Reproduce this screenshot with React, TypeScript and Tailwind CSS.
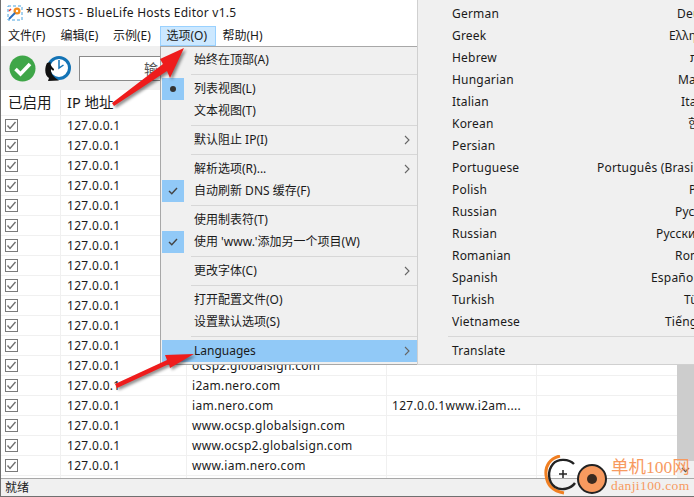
const FONT = "font-['Noto_Sans','Noto_Sans_CJK_SC',sans-serif]";

type MenuRow =
  | { sep: true }
  | { label: string; mark?: "dot" | "check"; arrow?: boolean; active?: boolean };

const menuRows: MenuRow[] = [
  { label: "始终在顶部(A)" },
  { sep: true },
  { label: "列表视图(L)", mark: "dot" },
  { label: "文本视图(T)" },
  { sep: true },
  { label: "默认阻止 IP(I)", arrow: true },
  { sep: true },
  { label: "解析选项(R)...", arrow: true },
  { label: "自动刷新 DNS 缓存(F)", mark: "check" },
  { sep: true },
  { label: "使用制表符(T)" },
  { label: "使用 'www.'添加另一个项目(W)", mark: "check" },
  { sep: true },
  { label: "更改字体(C)", arrow: true },
  { sep: true },
  { label: "打开配置文件(O)" },
  { label: "设置默认选项(S)" },
  { sep: true },
  { label: "Languages", arrow: true, active: true },
];

const languages: [string, string, string][] = [
  ["German", "Deutsch", "ml-[225px]"],
  ["Greek", "Ελληνικά", "ml-[217px]"],
  ["Hebrew", "עברית", "ml-[238px]"],
  ["Hungarian", "Magyar", "ml-[226px]"],
  ["Italian", "Italiano", "ml-[229px]"],
  ["Korean", "한국어", "ml-[236px]"],
  ["Persian", "", "ml-[240px]"],
  ["Portuguese", "Português (Brasil)", "ml-[145px]"],
  ["Polish", "Polski", "ml-[237px]"],
  ["Russian", "Русский", "ml-[223px]"],
  ["Russian", "Русский (Kaz)", "ml-[204px]"],
  ["Romanian", "Română", "ml-[223px]"],
  ["Spanish", "Español (ES)", "ml-[199px]"],
  ["Turkish", "Türkçe", "ml-[232px]"],
  ["Vietnamese", "Tiếng Việt", "ml-[213px]"],
];

const hosts: [string, string][] = [
  ...Array.from({ length: 12 }, (): [string, string] => ["", ""]),
  ["ocsp2.globalsign.com", ""],
  ["i2am.nero.com", ""],
  ["iam.nero.com", "127.0.0.1www.i2am...."],
  ["www.ocsp.globalsign.com", ""],
  ["www.ocsp2.globalsign.com", ""],
  ["www.iam.nero.com", ""],
  ["", ""],
];

function Check() {
  return (
    <svg width="13" height="13" viewBox="0 0 13 13" className="shrink-0">
      <rect x="0.5" y="0.5" width="12" height="12" fill="#fff" stroke="#7a7a7a" />
      <path d="M2.5 6.5 L5 9.5 L10.5 3" fill="none" stroke="#6f6f6f" strokeWidth="1.4" />
    </svg>
  );
}

function Chevron() {
  return (
    <svg width="6" height="10" viewBox="0 0 6 10" className="shrink-0">
      <path d="M1 1 L5 5 L1 9" fill="none" stroke="#666" strokeWidth="1.1" />
    </svg>
  );
}

function MainMenu() {
  return (
    <div className="absolute left-[159px] top-[46px] w-[258px] h-[319px] bg-[#f0f0f0] border border-[#a8a8a8] border-r-0 pt-[2px] pl-[1px] flex flex-col">
      {menuRows.map((r, i) =>
        "sep" in r ? (
          <div key={i} className="h-[7px] flex items-center pl-[29px]">
            <div className="h-px w-full bg-[#d7d7d7]" />
          </div>
        ) : (
          <div key={i} className={`h-[22px] flex items-center shrink-0 ${r.active ? "bg-[#91c9f7]" : ""}`}>
            <div className={`w-[22px] h-[22px] flex items-center justify-center shrink-0 ${r.mark ? "bg-[#91c9f7]" : ""}`}>
              {r.mark === "dot" && <div className="w-[6px] h-[6px] rounded-full bg-[#333]" />}
              {r.mark === "check" && (
                <svg width="10" height="8" viewBox="0 0 10 8">
                  <path d="M1 4 L3.8 6.8 L9 1" fill="none" stroke="#444" strokeWidth="1.4" />
                </svg>
              )}
            </div>
            <span className="ml-[10px] text-[12px] text-[#1a1a1a] whitespace-pre">{r.label}</span>
            {r.arrow && (
              <span className="ml-auto mr-[8px]">
                <Chevron />
              </span>
            )}
          </div>
        )
      )}
    </div>
  );
}

function SubMenu() {
  return (
    <div className="absolute left-[416px] top-0 w-[278px] h-[365px] bg-[#f0f0f0] border-l border-b border-[#d0d0d0] pt-[3px] flex flex-col">
      {languages.map(([a, b, cls], i) => (
        <div key={i} className="h-[22px] flex items-center shrink-0 pl-[34px] whitespace-nowrap text-[12px] text-[#1a1a1a] tracking-[0.2px]">
          <span className="w-0">{a}</span>
          <span className={cls}>{b}</span>
        </div>
      ))}
      <div className="h-[7px] flex items-center pl-[30px] shrink-0">
        <div className="h-px w-full bg-[#d7d7d7]" />
      </div>
      <div className="h-[22px] flex items-center shrink-0 pl-[34px] text-[12px] text-[#1a1a1a] tracking-[0.2px]">Translate</div>
    </div>
  );
}

function Arrows() {
  return (
    <svg width="694" height="497" viewBox="0 0 694 497" className="absolute -left-px top-0 pointer-events-none drop-shadow-[2px_2px_1.5px_rgba(0,0,0,0.45)]">
      <polygon points="112,103 163,64 160,59 184,48 170,78 167,71 114,106" fill="#ee1c1c" />
      <polygon points="115,384 167,360 165,355 194,354 170,368 169,364 117,388" fill="#ee1c1c" />
    </svg>
  );
}

function Watermark() {
  return (
    <div className="absolute left-[543px] top-[455px] w-[150px] h-[41px]">
      <svg width="68" height="42" viewBox="0 0 68 42" className="absolute left-0 top-0">
        <path d="M16 1 C6 3 1 11 2 20 C3 30 8 36 20 38" fill="none" stroke="#f07f22" strokeWidth="3" />
        <path d="M30 9 C25 4 14 3 9 9 C3 16 4 27 11 32 C17 36 27 34 31 28" fill="none" stroke="#222" strokeWidth="2.4" />
        <path d="M15 19 H23 M19 15 V23" stroke="#222" strokeWidth="1.5" />
        <circle cx="48" cy="24" r="14" fill="#f79a5f" stroke="#222" strokeWidth="2" />
        <circle cx="48" cy="24" r="5" fill="#3a2a20" />
      </svg>
      <span className="absolute left-[67px] top-0 text-[17.5px] leading-[24px] text-[#f79a5f] font-['Liberation_Serif','Noto_Sans_CJK_SC',serif] whitespace-nowrap">单机100网</span>
      <span className="absolute left-[67px] top-[22px] text-[13.5px] leading-[18px] text-[#f79a5f] font-['Liberation_Serif',serif] whitespace-nowrap tracking-[0.4px]">danji100.com</span>
    </div>
  );
}

export default function App() {
  return (
    <div className={`relative w-[694px] h-[497px] overflow-hidden bg-white flex flex-col border-l border-b border-[#707070] text-[12px] text-[#1a1a1a] ${FONT}`}>
      <div className="h-[26px] flex items-center shrink-0 pl-[6px]">
        <svg width="16" height="16" viewBox="0 0 16 16" className="shrink-0">
          <rect x="1" y="1" width="14" height="14" fill="#fff" stroke="#4aa3df" strokeDasharray="3 2" />
          <circle cx="10" cy="6" r="3.5" fill="#f28c1e" />
          <circle cx="10" cy="6" r="1.2" fill="#fff" />
          <path d="M2 14 L8 8" stroke="#2a6fc0" strokeWidth="2" />
          <path d="M2 6 L4 4" stroke="#e33" strokeWidth="1.5" />
        </svg>
        <span className="ml-[3px] text-[12px] tracking-[0.25px] whitespace-pre">* HOSTS - BlueLife Hosts Editor v1.5</span>
      </div>

      <div className="h-[20px] flex items-stretch shrink-0 pl-[1px]">
        {["文件(F)", "编辑(E)", "示例(E)"].map((m) => (
          <div key={m} className="w-[52.5px] flex items-center pl-[6px]">{m}</div>
        ))}
        <div className="w-[56px] flex items-center pl-[6px] bg-[#cce8ff] border border-[#99d1ff]">选项(O)</div>
        <div className="flex items-center pl-[7px]">帮助(H)</div>
      </div>

      <div className="h-[44px] bg-[#f0f0f0] flex items-center shrink-0 pl-[8px] gap-[9px]">
        <svg width="27" height="27" viewBox="0 0 27 27" className="shrink-0">
          <circle cx="13.5" cy="13.5" r="13" fill="#3fa648" />
          <path d="M6.5 14 L11.5 19 L21 9" fill="none" stroke="#fff" strokeWidth="3.6" />
        </svg>
        <svg width="28" height="28" viewBox="0 0 28 28" className="shrink-0">
          <circle cx="14" cy="14" r="10.5" fill="#fff" stroke="#1373b5" strokeWidth="3" />
          <path d="M14 6 V14 L18.5 11" fill="none" stroke="#1373b5" strokeWidth="1.5" />
          <path d="M2 9 C-1 15 0 22 4 24 L3 27 L14 26.5 C9 23 5.5 20 6 15 C8 17 9 17 9 15 C7 13 5 11 5.5 8 Z" fill="#111" />
        </svg>
        <div className="w-[90px] h-[25px] bg-white border border-[#8a8a8a] ml-[-3px] flex items-center pl-[64px] text-[14px] text-[#555] shrink-0">输</div>
      </div>

      <div className="h-[26px] flex shrink-0 items-stretch border-b border-[#f0f0f0]">
        <div className="w-[60px] flex items-center pl-[7px] pt-px text-[14.5px] border-r border-[#e5e5e5]">已启用</div>
        <div className="w-[126px] flex items-center pl-[6px] pt-px text-[14.5px]">IP 地址</div>
      </div>

      <div className="flex-1 min-h-0 flex">
        <div className="flex-1 min-w-0 overflow-hidden tracking-[0.3px]">
          {hosts.map(([host, extra], i) => (
            <div key={i} className="h-[20px] flex items-stretch border-b border-[#f0f0f0]">
              <div className="w-[60px] flex items-center pl-[4px] border-r border-[#f0f0f0] shrink-0"><Check /></div>
              <div className="w-[126px] flex items-center pl-[6px] pt-px border-r border-[#f0f0f0] shrink-0">127.0.0.1</div>
              <div className="w-[200px] flex items-center pl-[5px] pt-px border-r border-[#f0f0f0] shrink-0 whitespace-nowrap">{host}</div>
              <div className="w-[150px] flex items-center pl-[5px] pt-px border-r border-[#f0f0f0] shrink-0 whitespace-nowrap overflow-hidden">{extra}</div>
            </div>
          ))}
        </div>
        <div className="w-[17px] shrink-0 flex flex-col bg-[#f0f0f0]">
          <div className="flex-1 bg-[#cdcdcd]" />
          <div className="h-[17px] flex items-center justify-center">
            <svg width="9" height="6" viewBox="0 0 9 6"><path d="M1 1 L4.5 4.5 L8 1" fill="none" stroke="#505050" strokeWidth="1.4" /></svg>
          </div>
        </div>
      </div>

      <div className="h-[18px] bg-[#f0f0f0] border-t border-[#a8a8a8] flex items-center pl-[4px] shrink-0">就绪</div>

      <MainMenu />
      <SubMenu />
      <Arrows />
      <Watermark />
    </div>
  );
}
